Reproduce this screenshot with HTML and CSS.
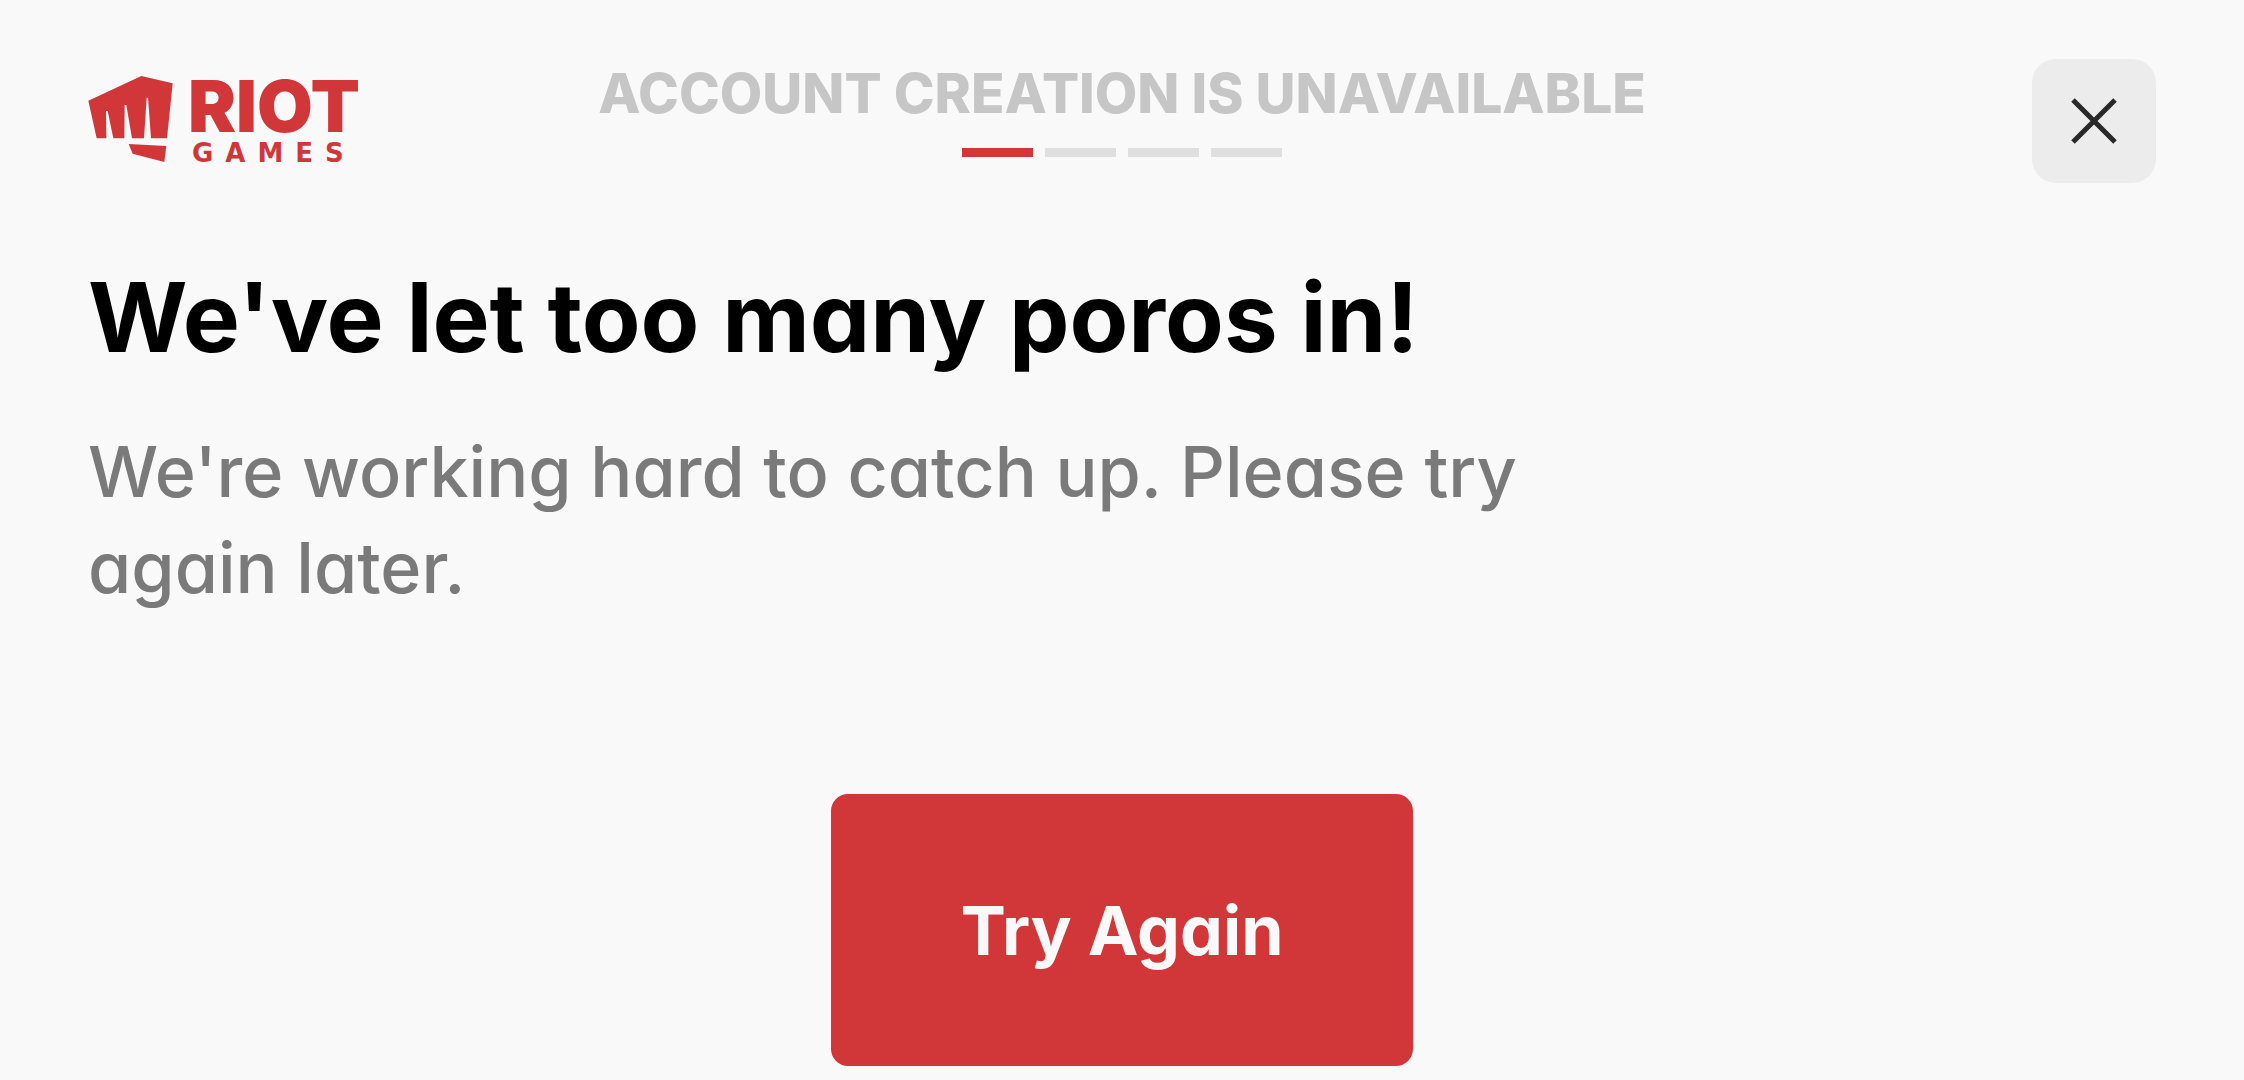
FILE: index.html
```html
<!DOCTYPE html>
<html lang="en">
<head>
<meta charset="utf-8">
<meta name="viewport" content="width=device-width, initial-scale=1">
<title>Account creation is unavailable</title>
<link rel="stylesheet" href="styles.css">
</head>
<body>
<div class="page">
  <header class="header">
    <a class="logo" href="#" aria-label="Riot Games">
      <svg class="logo-mark" viewBox="24 33 253 258" aria-hidden="true">
        <path d="M183 33 277 55 260 220H212L203 98H199L191 220H155L138 120H133L132 220H99L82 138H77L78 220H49L24 107Z"/>
        <path d="M145 237 258 243 252 291 157 266Z"/>
      </svg>
      <span class="wordmark">
        <span class="wordmark-top">RIOT</span>
        <span class="wordmark-bottom">GAMES</span>
      </span>
    </a>
    <div class="progress">
      <p class="progress-title">ACCOUNT CREATION IS UNAVAILABLE</p>
      <ol class="steps" aria-label="Step 1 of 4">
        <li class="step step-active"></li>
        <li class="step"></li>
        <li class="step"></li>
        <li class="step"></li>
      </ol>
    </div>
    <button class="close" type="button" aria-label="Close">
      <svg class="close-icon" viewBox="0 0 46 46" aria-hidden="true">
        <path d="M2 2 44 44M44 2 2 44"/>
      </svg>
    </button>
  </header>
  <main class="content">
    <h1 class="heading">We've let too many poros in!</h1>
    <p class="message">We're working hard to catch up. Please try again later.</p>
    <button class="retry" type="button">Try Again</button>
  </main>
</div>
</body>
</html>
```
FILE: styles.css
```css
* {
  box-sizing: border-box;
  margin: 0;
  padding: 0;
}

body {
  background: #f9f9f9;
  color: #000;
  font-family: Inter, "Liberation Sans", sans-serif;
  /* single-storey "a" */
  font-feature-settings: "cv11";
}

button {
  border: 0;
  font: inherit;
  font-feature-settings: inherit;
  cursor: pointer;
}

.page {
  padding: 59px 88px 14px;
}

.header {
  display: grid;
  grid-template-columns: 1fr auto 1fr;
  align-items: start;
}

.logo {
  display: flex;
  align-items: flex-start;
  justify-self: start;
  gap: 15px;
  padding-top: 17px;
  color: #d13639;
  text-decoration: none;
}

.logo-mark {
  width: 85px;
  height: 86px;
  fill: currentColor;
}

.wordmark {
  display: flex;
  flex-direction: column;
}

.wordmark-top {
  font-size: 72px;
  font-weight: 900;
  line-height: 60px;
}

.wordmark-bottom {
  padding-left: 4px;
  font-family: "DejaVu Sans", sans-serif;
  font-size: 26px;
  font-weight: 700;
  line-height: 34px;
  letter-spacing: 12px;
}

.progress {
  display: flex;
  flex-direction: column;
  align-items: center;
  gap: 20px;
}

.progress-title {
  color: #c6c6c6;
  font-size: 55px;
  font-weight: 800;
  line-height: 69px;
}

.steps {
  display: flex;
  gap: 12px;
  list-style: none;
}

.step {
  width: 71px;
  height: 9px;
  background: #dfdfdf;
}

.step-active {
  background: #d13639;
}

.close {
  display: flex;
  align-items: center;
  justify-content: center;
  justify-self: end;
  width: 124px;
  height: 124px;
  border-radius: 24px;
  background: #ececec;
}

.close-icon {
  width: 46px;
  height: 46px;
  fill: none;
  stroke: #282828;
  stroke-width: 5;
}

.content {
  display: flex;
  flex-direction: column;
  padding-top: 78px;
}

.heading {
  font-size: 96px;
  font-weight: 700;
  line-height: 112px;
}

.message {
  max-width: 1500px;
  margin-top: 51px;
  color: #7a7a7a;
  font-size: 70px;
  font-weight: 500;
  line-height: 96px;
}

.retry {
  align-self: center;
  margin-top: 178px;
  padding: 88px 129px;
  border-radius: 17px;
  background: #d13639;
  color: #f9f9f9;
  font-size: 68px;
  font-weight: 700;
  line-height: 96px;
}
```
